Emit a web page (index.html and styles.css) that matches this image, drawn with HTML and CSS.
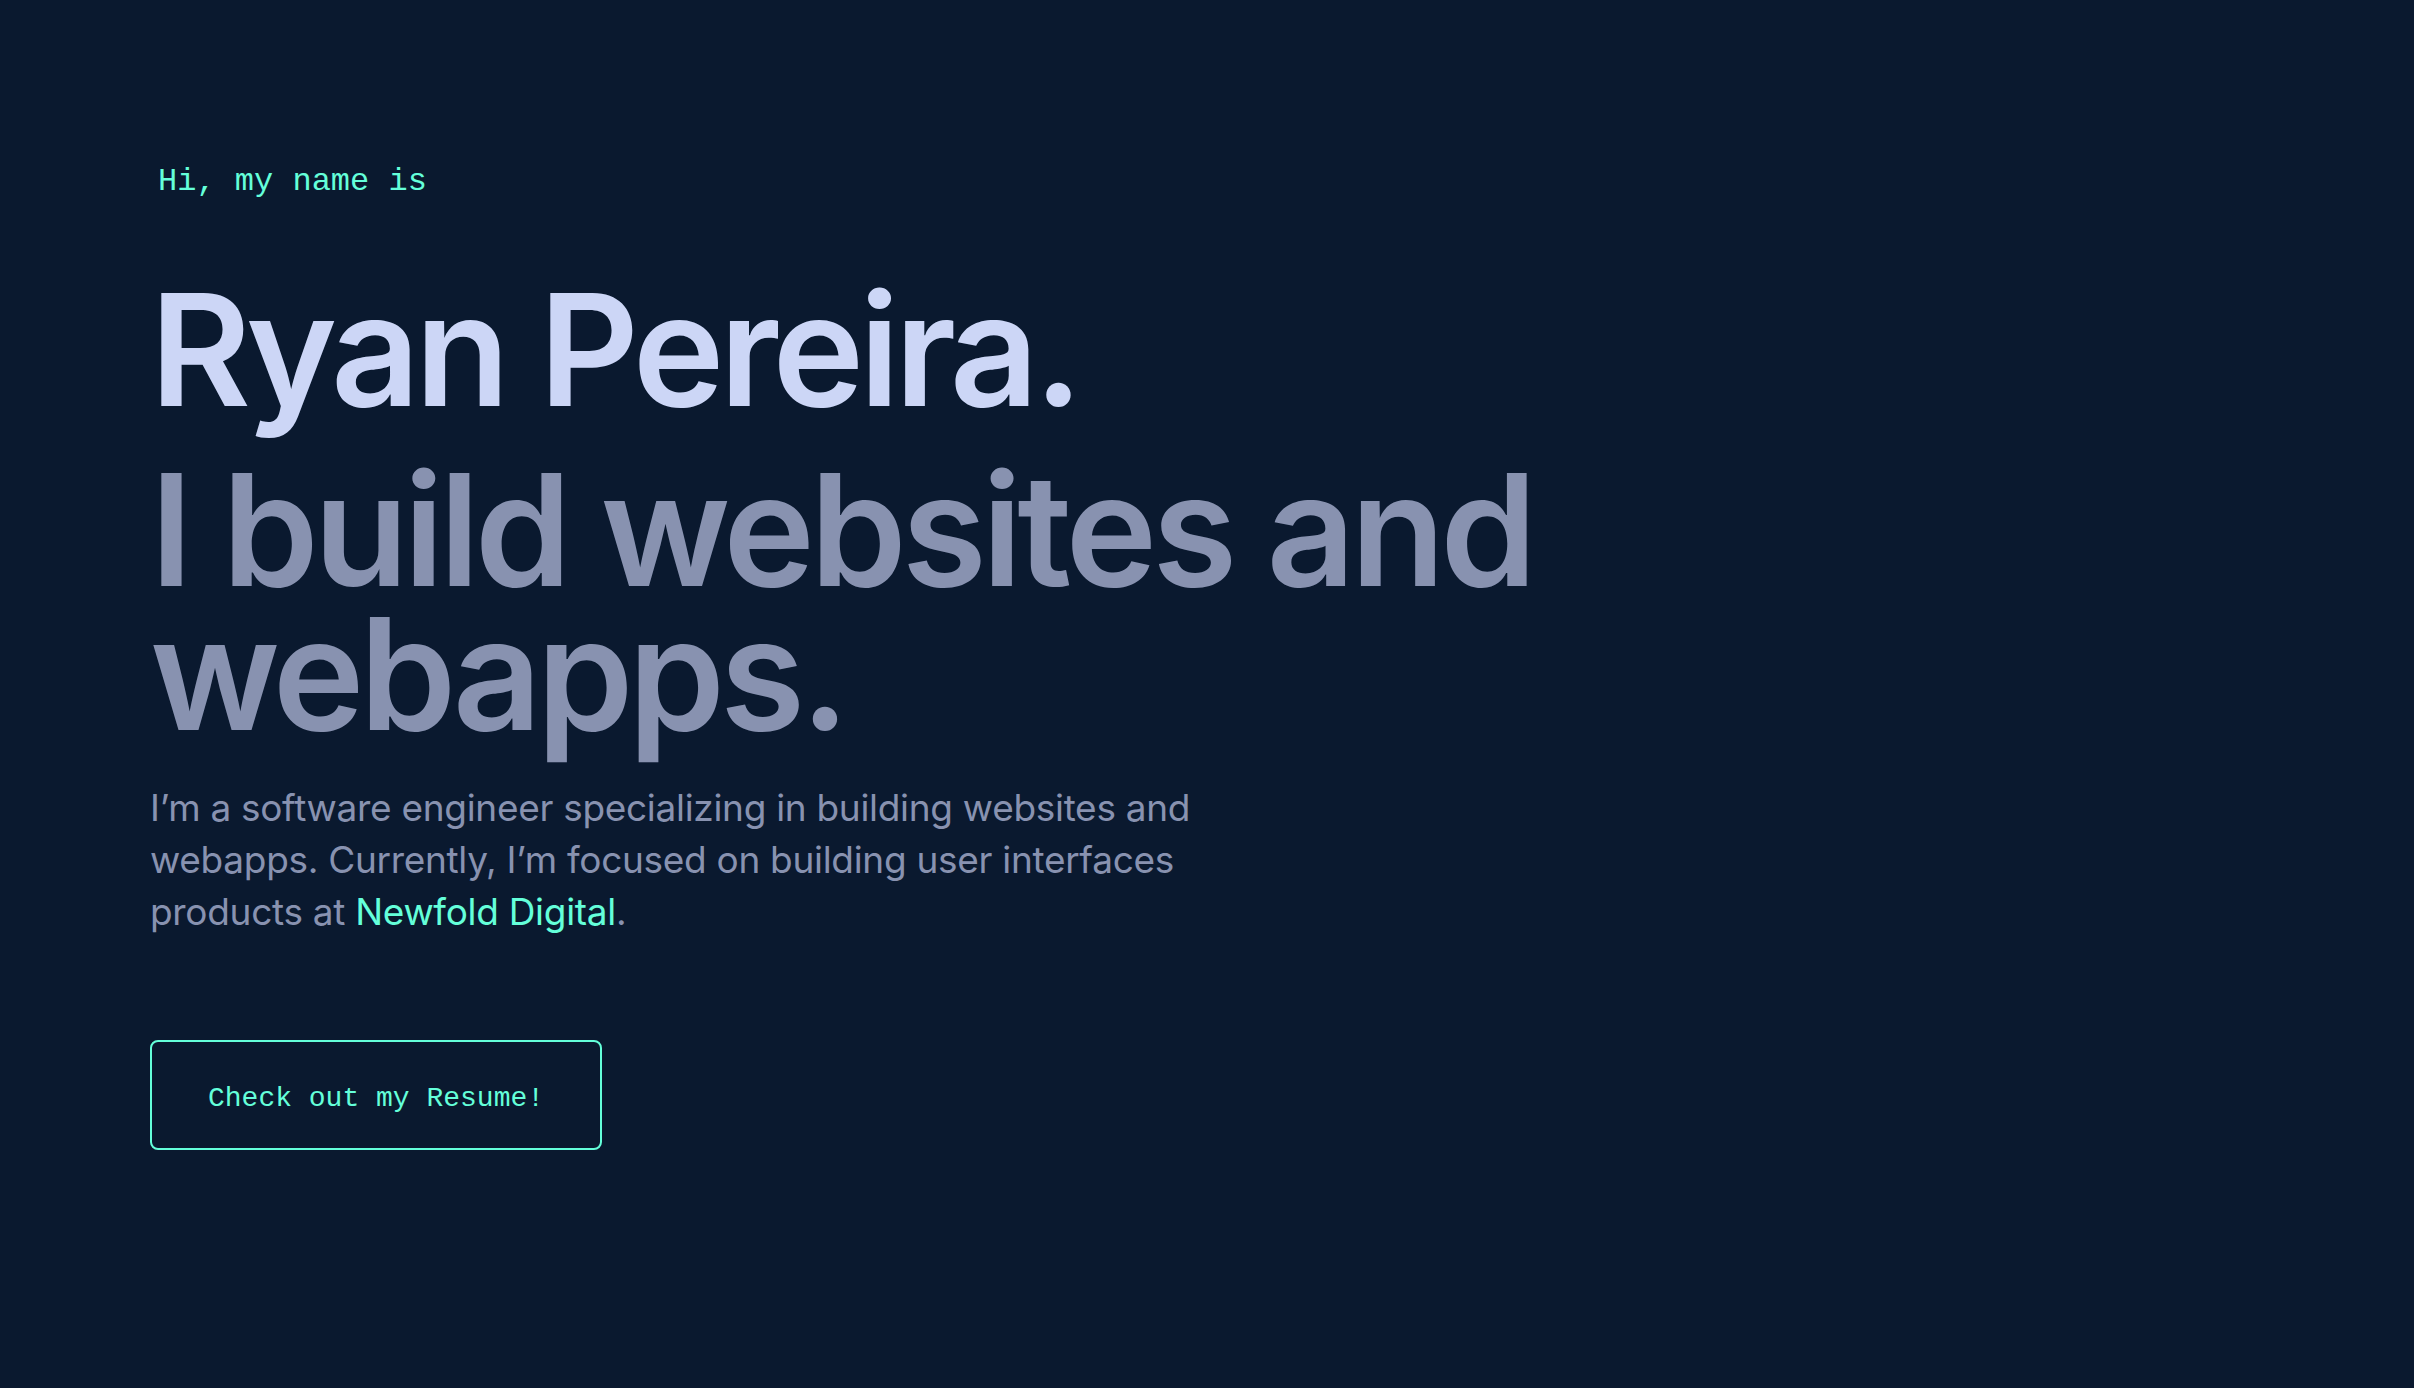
FILE: index.html
```html
<!DOCTYPE html>
<html lang="en">
<head>
<meta charset="utf-8">
<title>Ryan Pereira</title>
<link rel="stylesheet" href="styles.css">
</head>
<body>
<main class="hero">
  <h1 class="hi">Hi, my name is</h1>
  <h2 class="big-heading name">Ryan Pereira.</h2>
  <h3 class="big-heading slogan">I build websites and webapps.</h3>
  <p class="intro">I’m a software engineer specializing in building websites and webapps. Currently, I’m focused on building user interfaces products at <a class="link" href="#">Newfold Digital</a>.</p>
  <a class="resume-btn" href="#">Check out my Resume!</a>
</main>
</body>
</html>
```

FILE: styles.css
```css
html, body {
  margin: 0;
  padding: 0;
  background: #0a192f;
}
body {
  width: 2414px;
  height: 1388px;
  overflow: hidden;
  font-family: Inter, "Noto Sans", sans-serif;
}
.hero {
  display: flex;
  flex-direction: column;
  align-items: flex-start;
  padding: 161.5px 0 0 150px;
}
.hi {
  margin: 0 0 0 8px;
  font-family: "Courier New", "Liberation Mono", monospace;
  font-weight: 400;
  font-size: 32px;
  line-height: 40px;
  color: #64ffda;
}
.big-heading {
  margin: 0;
  font-size: 155px;
  line-height: 144px;
  font-weight: 600;
  letter-spacing: -5px;
}
.name {
  margin-top: 76px;
  color: #ccd6f6;
}
.slogan {
  margin-top: 36px;
  color: #8892b0;
  max-width: 1500px;
}
.intro {
  margin: 36.6px 0 0 0;
  max-width: 1080px;
  font-size: 37px;
  line-height: 52px;
  letter-spacing: -0.3px;
  color: #8892b0;
  font-weight: 400;
}
.link {
  color: #64ffda;
  text-decoration: none;
}
.resume-btn {
  margin-top: 102px;
  padding: 43px 56px 35px;
  border: 2px solid #64ffda;
  border-radius: 8px;
  font-family: "Courier New", "Liberation Mono", monospace;
  font-size: 28px;
  line-height: 28px;
  color: #64ffda;
  text-decoration: none;
}
```
